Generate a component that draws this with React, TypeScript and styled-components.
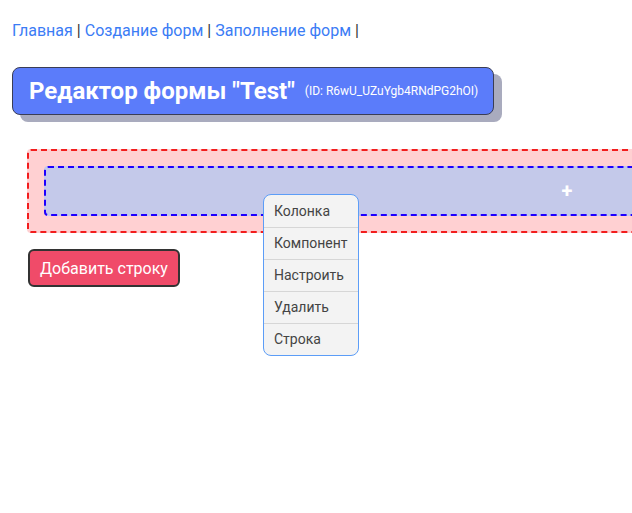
import React from "react";
import styled, { createGlobalStyle } from "styled-components";

const Global = createGlobalStyle`
  html { overflow: hidden; }
  html, body { margin: 0; padding: 0; background: #fff; }
  body { font-family: Roboto, "Noto Sans", Arial, sans-serif; }
`;

const Page = styled.div`
  position: relative;
  padding: 20px 12px 0 12px;
  width: 1200px;
  min-height: 480px;
`;

const Nav = styled.nav`
  font-size: 16px;
  line-height: 22px;
  color: #333;
`;

const NavLink = styled.a`
  color: #3b7cf5;
  text-decoration: none;
`;

const Sep = styled.span`
  color: #333;
  margin: 0 4px;
`;

const Header = styled.div`
  margin-top: 25px;
  display: inline-flex;
  align-items: center;
  gap: 10px;
  height: 46px;
  padding: 0 15px 0 16px;
  box-sizing: content-box;
  background: #5b7cfa;
  border: 1px solid #3a3d55;
  border-radius: 8px;
  box-shadow: 8px 7px 0 #a9abbe;
  color: #fff;
`;

const Title = styled.h1`
  margin: 0;
  font-size: 24px;
  font-weight: 700;
`;

const FormId = styled.span`
  font-size: 12px;
`;

const Row = styled.div`
  margin: 34px 0 0 15px;
  width: 1046px;
  padding: 15px;
  background: #ffd0d2;
  border: 2px dashed #f21d1d;
  border-radius: 4px;
`;

const Column = styled.div`
  height: 46px;
  display: flex;
  align-items: center;
  justify-content: center;
  background: #c4c9ea;
  border: 2px dashed #1e00ff;
  border-radius: 4px;
`;

const Plus = styled.span`
  color: #fff;
  font-size: 20px;
  font-weight: 700;
`;

const AddButton = styled.button`
  margin: 16px 0 0 16px;
  height: 38px;
  width: 152px;
  padding: 0;
  background: #f04b69;
  border: 2px solid #333;
  border-radius: 6px;
  color: #fff;
  font-family: Roboto, Arial, sans-serif;
  font-size: 16px;
`;

const Menu = styled.ul`
  position: absolute;
  left: 263px;
  top: 194px;
  width: 94px;
  margin: 0;
  padding: 0;
  list-style: none;
  background: #f3f3f3;
  border: 1px solid #5c9df7;
  border-radius: 8px;
  overflow: hidden;
`;

const MenuItem = styled.li`
  height: 31px;
  line-height: 31px;
  padding-left: 10px;
  font-size: 14px;
  color: #444;
  border-top: 1px solid #d6d6d6;
  &:first-child { border-top: none; height: 32px; line-height: 32px; }
`;

const items = ["Колонка", "Компонент", "Настроить", "Удалить", "Строка"];

export default function App() {
  return (
    <>
      <Global />
      <Page>
        <Nav>
          <NavLink href="#">Главная</NavLink>
          <Sep>|</Sep>
          <NavLink href="#">Создание форм</NavLink>
          <Sep>|</Sep>
          <NavLink href="#">Заполнение форм</NavLink>
          <Sep>|</Sep>
        </Nav>
        <Header>
          <Title>Редактор формы "Test"</Title>
          <FormId>(ID: R6wU_UZuYgb4RNdPG2hOI)</FormId>
        </Header>
        <Row>
          <Column>
            <Plus>+</Plus>
          </Column>
        </Row>
        <AddButton>Добавить строку</AddButton>
        <Menu>
          {items.map((t) => (
            <MenuItem key={t}>{t}</MenuItem>
          ))}
        </Menu>
      </Page>
    </>
  );
}
